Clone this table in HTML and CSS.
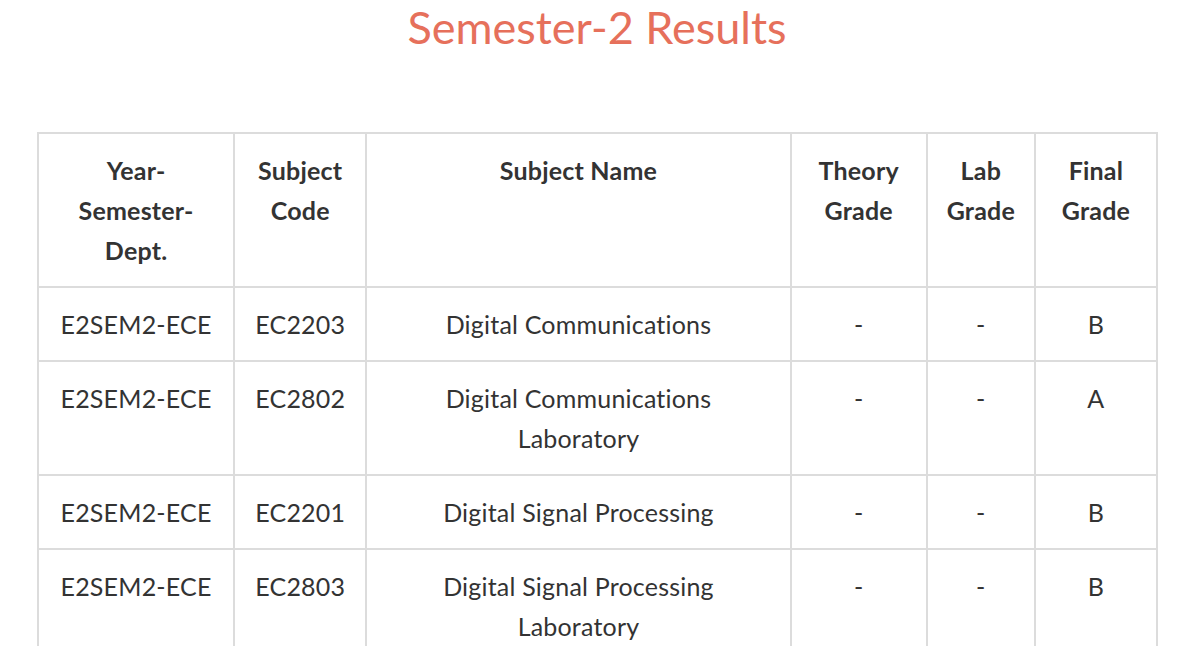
FILE: index.html
```html
<!DOCTYPE html>
<html>
<head>
<meta charset="utf-8">
<link rel="stylesheet" href="styles.css">
</head>
<body>
<h1 class="title">Semester-2 Results</h1>
<table class="results">
  <colgroup>
    <col class="c1"><col class="c2"><col class="c3"><col class="c4"><col class="c5"><col class="c6">
  </colgroup>
  <thead>
    <tr>
      <th>Year-<br>Semester-<br>Dept.</th>
      <th>Subject<br>Code</th>
      <th>Subject Name</th>
      <th>Theory<br>Grade</th>
      <th>Lab<br>Grade</th>
      <th>Final<br>Grade</th>
    </tr>
  </thead>
  <tbody>
    <tr><td>E2SEM2-ECE</td><td>EC2203</td><td>Digital Communications</td><td>-</td><td>-</td><td>B</td></tr>
    <tr><td>E2SEM2-ECE</td><td>EC2802</td><td>Digital Communications<br>Laboratory</td><td>-</td><td>-</td><td>A</td></tr>
    <tr><td>E2SEM2-ECE</td><td>EC2201</td><td>Digital Signal Processing</td><td>-</td><td>-</td><td>B</td></tr>
    <tr><td>E2SEM2-ECE</td><td>EC2803</td><td>Digital Signal Processing<br>Laboratory</td><td>-</td><td>-</td><td>B</td></tr>
  </tbody>
</table>
</body>
</html>
```

FILE: styles.css
```css
html, body {
  margin: 0;
  padding: 0;
  background: #ffffff;
}
body {
  font-family: "Lato", "Open Sans", sans-serif;
  font-variant-ligatures: none;
  color: #333333;
  padding: 0 33px 0 37px;
  overflow: hidden;
}
.title {
  margin: 0;
  font-size: 45px;
  line-height: 54px;
  font-weight: 400;
  color: #e6705b;
  text-align: center;
  margin-bottom: 78px;
}
.results {
  width: 1121px;
  border-collapse: collapse;
  table-layout: fixed;
  font-size: 25px;
  line-height: 40px;
  letter-spacing: 0.2px;
}
.c1 { width: 196px; }
.c2 { width: 132px; }
.c3 { width: 424px; }
.c4 { width: 136px; }
.c5 { width: 108px; }
.c6 { width: 122px; }
.results th,
.results td {
  border: 2px solid #dcdcdc;
  padding: 16px 8px;
  text-align: center;
  vertical-align: top;
}
.results th {
  font-weight: 700;
}
.results td {
  font-weight: 400;
}
```
